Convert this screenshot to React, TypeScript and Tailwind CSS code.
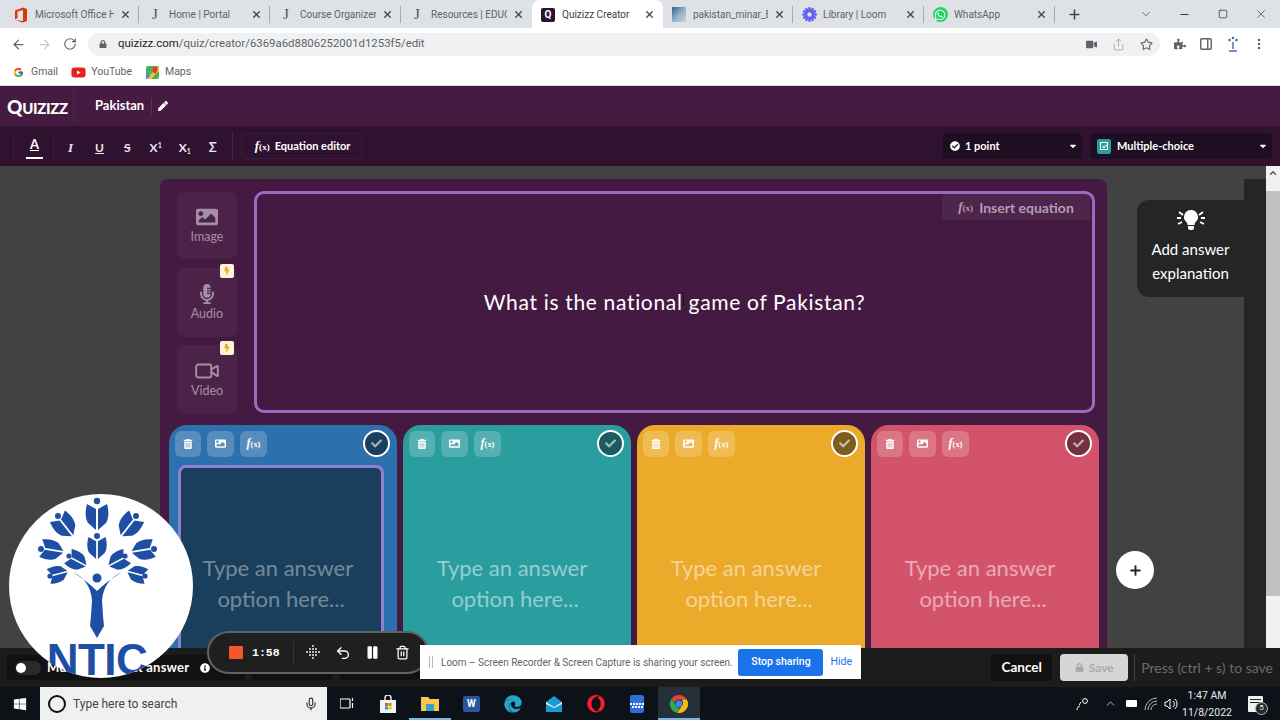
import React from 'react';
import { ArrowLeft, ArrowRight, RotateCw, Plus, X, Minus, Square, ChevronDown, ChevronUp, Video, Star, Share, PanelRight, MoreVertical, Undo2, Pause, Trash2, Mic } from 'lucide-react';
import { FaTrashAlt, FaImage, FaMicrophoneAlt, FaCheck, FaPen, FaCheckCircle, FaBolt, FaLock, FaPuzzlePiece, FaWhatsapp, FaWindows, FaYoutube, FaEdge, FaOpera, FaVideo, FaInfoCircle, FaCaretDown } from 'react-icons/fa';
import { FcGoogle } from 'react-icons/fc';

const quiz = "font-['Lato',sans-serif]";

const OfficeIcon = () => (
  <svg width="14" height="16" viewBox="0 0 14 16">
    <path d="M1 3.5 9 0.5l4 1.5v12l-4 1.5-8-2.5 8 1V3L3.5 4.5V11L1 12.5z" fill="#d83b01" />
  </svg>
);

const JIcon = () => <span className="w-4 text-center text-[15px] leading-none text-[#44546a] font-['Liberation_Serif',serif]">J</span>;

const QuizizzIcon = () => (
  <span className="flex h-[14px] w-[14px] items-center justify-center rounded-[2px] bg-[#2a1330] text-[10px] font-bold leading-none text-white">Q</span>
);

const MinarIcon = () => <span className="h-[15px] w-[14px] rounded-[1px] bg-gradient-to-br from-[#2f5f8f] via-[#8fb2c9] to-[#c8d6dd]" />;

const LoomIcon = () => (
  <svg width="15" height="15" viewBox="0 0 24 24">
    {[0, 30, 60, 90, 120, 150].map((r) => (
      <rect key={r} x="10" y="0" width="4" height="24" rx="2" fill="#625df5" transform={`rotate(${r} 12 12)`} />
    ))}
    <circle cx="12" cy="12" r="3.5" fill="#dee1e6" />
  </svg>
);

const WhatsIcon = () => (
  <span className="flex h-[15px] w-[15px] items-center justify-center rounded-full bg-[#25d366] text-white">
    <FaWhatsapp size={12} />
  </span>
);

const tabs = [
  { title: 'Microsoft Office H', icon: <OfficeIcon />, w: 'w-[134px]', sep: true },
  { title: 'Home | Portal', icon: <JIcon />, w: 'w-[131px]', sep: true },
  { title: 'Course Organizer', icon: <JIcon />, w: 'w-[131px]', sep: true },
  { title: 'Resources | EDUC', icon: <JIcon />, w: 'w-[131px]', sep: false },
  { title: 'Quizizz Creator', icon: <QuizizzIcon />, w: 'w-[131px]', sep: false, active: true },
  { title: 'pakistan_minar_B', icon: <MinarIcon />, w: 'w-[130px]', sep: true },
  { title: 'Library | Loom', icon: <LoomIcon />, w: 'w-[131px]', sep: true },
  { title: 'WhatsApp', icon: <WhatsIcon />, w: 'w-[131px]', sep: true },
];

const ChromeTabs = () => (
  <div className="flex h-[28px] items-end bg-[#dee1e6] pl-[5px] font-['Roboto',sans-serif] text-[10px] text-[#5f6368]">
    {tabs.map((t) => (
      <div
        key={t.title}
        className={`relative flex h-[28px] items-center gap-[6px] pl-2 pr-2 pt-[1px] ${t.w} ${t.active ? 'rounded-t-lg bg-white text-[#3c4043]' : ''}`}
      >
        <span className="flex w-4 shrink-0 justify-center">{t.icon}</span>
        <span className="min-w-0 flex-1 overflow-hidden whitespace-nowrap">{t.title}</span>
        <X size={11} strokeWidth={3} className="shrink-0 text-[#45474a]" />
        {t.sep && <span className="absolute right-0 top-[6px] h-[17px] w-px bg-[#a8abb0]" />}
      </div>
    ))}
    <div className="flex h-[28px] flex-1 items-center pl-[12px] text-[#45474a]">
      <Plus size={15} strokeWidth={2.5} />
      <ChevronDown size={14} strokeWidth={1.2} className="ml-[57px]" />
      <Minus size={13} strokeWidth={1.6} className="ml-[25px] text-[#222]" />
      <Square size={10} strokeWidth={1.6} className="ml-[27px] text-[#222]" />
      <X size={14} strokeWidth={1} className="ml-[26px] text-[#222]" />
    </div>
  </div>
);

const AddressBar = () => (
  <div className="flex h-[31px] items-center bg-white pl-[11px] pt-[1px] text-[#5f6368]">
    <ArrowLeft size={15} strokeWidth={2} />
    <ArrowRight size={15} strokeWidth={2} className="ml-[11px] text-[#c4c7cb]" />
    <RotateCw size={14} strokeWidth={2} className="ml-[11px]" />
    <div className="ml-[11px] flex h-[23px] w-[1072px] items-center rounded-full bg-[#eff1f2] pl-[11px] font-['Roboto',sans-serif] text-[11.4px] text-[#5f6368]">
      <FaLock size={8} />
      <span className="ml-[11px] text-[#202124]">quizizz.com</span>
      <span>/quiz/creator/6369a6d8806252001d1253f5/edit</span>
      <span className="ml-auto flex items-center pr-[7px]">
        <FaVideo size={11} />
        <Share size={13} strokeWidth={1.5} className="ml-[15px] text-[#9a9da1]" />
        <Star size={13} strokeWidth={2} className="ml-[15px]" />
      </span>
    </div>
    <FaPuzzlePiece size={12} className="ml-[14px]" />
    <PanelRight size={14} strokeWidth={2.4} className="ml-[13px]" />
    <svg width="12" height="18" viewBox="0 0 12 18" className="ml-[14px]">
      <circle cx="6" cy="3" r="1.3" fill="#3f6fb0" />
      <circle cx="2.5" cy="5" r="1.3" fill="#3f6fb0" />
      <circle cx="9.5" cy="5" r="1.3" fill="#3f6fb0" />
      <path d="M6 7v7M2 16h8" stroke="#3f6fb0" strokeWidth="1.4" />
    </svg>
    <MoreVertical size={14} strokeWidth={2.4} className="ml-[13px]" />
  </div>
);

const Bookmarks = () => (
  <div className="flex h-[27px] items-center border-b border-[#d8d8d8] bg-white pl-[13px] font-['Roboto',sans-serif] text-[10.5px] text-[#5f6368]">
    <FcGoogle size={11} />
    <span className="ml-[7px]">Gmail</span>
    <FaYoutube size={15} className="ml-[13px] text-[#e62117]" />
    <span className="ml-[5px]">YouTube</span>
    <svg width="13" height="13" viewBox="0 0 13 13" className="ml-[14px]">
      <rect width="13" height="13" rx="2" fill="#4caf50" />
      <path d="M0 13 13 0v5L5 13z" fill="#fbc02d" />
      <path d="M9 1a2.6 2.6 0 0 1 2.6 2.6C11.6 5.5 9 8 9 8S6.4 5.5 6.4 3.6A2.6 2.6 0 0 1 9 1z" fill="#e53935" />
      <path d="M0 6l4 4-3 3H0z" fill="#4285f4" />
    </svg>
    <span className="ml-[6px]">Maps</span>
  </div>
);

const FxMark = ({ className = '' }: { className?: string }) => (
  <span className={`font-['Liberation_Serif',serif] font-bold italic leading-none ${className}`}>
    f<span className="text-[0.7em] not-italic">(x)</span>
  </span>
);

const QuizHeader = () => (
  <div className={`flex h-[40px] items-center bg-[#461b42] pl-[7px] text-white ${quiz}`}>
    <span className="w-[66px] whitespace-nowrap text-[15px] font-black leading-none tracking-[-0.3px]">
      <span className="text-[19px]">Q</span>UIZIZZ
    </span>
    <span className="h-[34px] w-px bg-white/5" />
    <span className="ml-[21px] text-[13px] font-bold">Pakistan</span>
    <span className="ml-[7px] h-[16px] w-px bg-white/10" />
    <FaPen size={10} className="ml-[6px]" />
  </div>
);

const fmtButtons = [
  { label: <em className="font-['Liberation_Serif',serif] text-[13px] font-bold">I</em>, w: 'ml-[14px]' },
  { label: <span className="text-[12px] font-bold underline">U</span>, w: 'ml-[22px]' },
  { label: <span className="text-[12px] font-bold line-through">S</span>, w: 'ml-[20px]' },
  { label: <span className="text-[12px] font-bold">X<span className="relative top-[-4px] text-[7px]">1</span></span>, w: 'ml-[19px]' },
  { label: <span className="text-[12px] font-bold">X<span className="relative top-[2px] text-[7px]">1</span></span>, w: 'ml-[17px]' },
  { label: <span className="text-[13px] font-bold">Σ</span>, w: 'ml-[18px]' },
];

const FormatBar = () => (
  <div className={`flex h-[40px] items-center bg-[#2e1230] text-[#e9e3ea] ${quiz}`}>
    <span className="ml-[13px] h-[26px] w-px bg-white/5" />
    <span className="ml-[12px] flex h-[26px] w-[17px] flex-col items-center justify-center border-b-2 border-white text-[13px] font-bold text-white">
      <span className="underline underline-offset-1">A</span>
    </span>
    <span className="ml-[10px] h-[26px] w-px bg-white/5" />
    {fmtButtons.map((b, i) => (
      <span key={i} className={`leading-none ${b.w}`}>{b.label}</span>
    ))}
    <span className="ml-[15px] h-[26px] w-px bg-white/10" />
    <div className="ml-[8px] flex h-[26px] w-[121px] items-center rounded-[4px] border border-white/5 pl-[13px] text-[11px] font-bold text-white">
      <FxMark className="text-[13px]" />
      <span className="ml-[5px]">Equation editor</span>
    </div>
    <div className="ml-auto flex items-center pr-[8px]">
      <div className="flex h-[26px] w-[139px] items-center rounded-[4px] bg-[#1f0d21] pl-[7px] text-[11px] font-bold text-white">
        <FaCheckCircle size={10} />
        <span className="ml-[5px]">1 point</span>
        <FaCaretDown size={10} className="ml-auto mr-[4px]" />
      </div>
      <div className="ml-[8px] flex h-[26px] w-[182px] items-center rounded-[4px] bg-[#1f0d21] pl-[7px] text-[11px] font-bold text-white">
        <span className="flex h-[15px] w-[14px] items-center justify-center rounded-[2px] bg-[#2a9d9f]">
          <span className="flex h-[8px] w-[8px] items-center justify-center border border-white"><FaCheck size={5} /></span>
        </span>
        <span className="ml-[6px]">Multiple-choice</span>
        <FaCaretDown size={10} className="ml-auto mr-[4px]" />
      </div>
    </div>
  </div>
);

const BoltBadge = () => (
  <span className="absolute right-[3px] top-[-4px] flex h-[14px] w-[14px] items-center justify-center rounded-[2px] bg-[#fff3d6] text-[#eaa92a]">
    <FaBolt size={8} />
  </span>
);

const MediaButton = ({ label, icon, h, badge }: { label: string; icon: React.ReactNode; h: string; badge?: boolean }) => (
  <div className={`relative flex w-[60px] flex-col items-center justify-center rounded-lg bg-white/[0.035] text-[#a48fa5] ${h}`}>
    {badge && <BoltBadge />}
    <span className="flex h-[22px] items-center">{icon}</span>
    <span className="mt-[1px] text-[12.5px] leading-[16px]">{label}</span>
  </div>
);

const answers = [
  { bg: 'bg-[#2d70ae]', chk: 'bg-[#1a3f5c]', inner: 'border-[#8f80cf] bg-[#1a3f5c]', tint: 'text-white/40' },
  { bg: 'bg-[#2a9d9f]', chk: 'bg-[#1b5c63]', inner: 'border-transparent', tint: 'text-white/50' },
  { bg: 'bg-[#ecaa2a]', chk: 'bg-[#7d5c1f]', inner: 'border-transparent', tint: 'text-white/50' },
  { bg: 'bg-[#d3546a]', chk: 'bg-[#74303f]', inner: 'border-transparent', tint: 'text-white/50' },
];

const AnswerCard = ({ a }: { a: (typeof answers)[number] }) => (
  <div className={`flex h-[224px] w-[228px] flex-col overflow-hidden rounded-t-[18px] ${a.bg}`}>
    <div className="flex items-center pl-[6px] pr-[7px] pt-[5px] text-white">
      <span className="flex h-[26px] w-[26px] items-center justify-center rounded-[6px] bg-white/20"><FaTrashAlt size={10} /></span>
      <span className="ml-[6px] flex h-[26px] w-[27px] items-center justify-center rounded-[6px] bg-white/20"><FaImage size={11} /></span>
      <span className="ml-[6px] flex h-[26px] w-[27px] items-center justify-center rounded-[6px] bg-white/20"><FxMark className="text-[12px]" /></span>
      <span className={`ml-auto flex h-[27px] w-[27px] items-center justify-center rounded-full border-2 border-white text-white/60 ${a.chk}`}><FaCheck size={11} /></span>
    </div>
    <div className={`ml-[9px] mr-[13px] mt-[8px] flex-1 rounded-t-[8px] border-[3px] border-b-0 pt-[84px] text-center text-[22px] leading-[31px] ${a.inner} ${a.tint}`}>
      <div className="whitespace-nowrap pr-[6px]">Type an answer</div>
      <div className="whitespace-nowrap">option here...</div>
    </div>
  </div>
);

const Editor = () => (
  <div className={`relative flex h-[482px] overflow-hidden bg-[#424242] ${quiz}`}>
    <div className="ml-[160px] mt-[13px] w-[947px] rounded-t-lg bg-[#451a42]">
      <div className="flex pl-[17px] pt-[12px]">
        <div className="flex w-[60px] flex-col">
          <MediaButton label="Image" h="h-[67px] mt-[1px]" icon={<FaImage size={22} />} />
          <div className="mt-[9px]">
            <MediaButton label="Audio" h="h-[69px]" badge icon={<FaMicrophoneAlt size={20} />} />
          </div>
          <div className="mt-[8px]">
            <MediaButton label="Video" h="h-[69px]" badge icon={<Video size={26} strokeWidth={1.8} />} />
          </div>
        </div>
        <div className="relative ml-[17px] flex h-[222px] w-[841px] items-center justify-center rounded-[10px] border-[3px] border-[#9b6bc0] text-[21px] tracking-[0.67px] text-white">
          <span>What is the national game of Pakistan?</span>
          <span className="absolute right-[2px] top-0 flex h-[26px] w-[148px] items-center justify-center gap-[6px] rounded-[4px] bg-white/5 text-[14px] font-bold tracking-normal text-[#b49cb3]">
            <FxMark className="text-[13px]" />
            Insert equation
          </span>
          <svg width="7" height="14" viewBox="0 0 7 14" fill="none" stroke="#1a1a1a" strokeWidth="1" className="absolute left-[423px] top-[98px]">
            <path d="M1 1h5M3.5 1v12M1 13h5" />
          </svg>
        </div>
      </div>
      <div className="flex gap-[6px] pl-[9px] pt-[11px]">
        {answers.map((a, i) => (
          <AnswerCard key={i} a={a} />
        ))}
      </div>
    </div>
    <div className="ml-[30px] mt-[34px] flex h-[97px] w-[107px] flex-col items-center rounded-l-[12px] bg-[#252525] pt-[8px] text-white">
      <svg width="28" height="24" viewBox="0 0 28 24" fill="white">
        <path d="M14 2a7 7 0 0 0-4.5 12.3c.8.8 1 1.5 1 2.7h7c0-1.2.2-1.9 1-2.7A7 7 0 0 0 14 2zM11 18h6v2a2 2 0 0 1-2 2h-2a2 2 0 0 1-2-2z" />
        <path d="M2 4l4 3M1 16l4-2M26 4l-4 3M27 16l-4-2M0 10h4M24 10h4" stroke="white" strokeWidth="1.8" />
      </svg>
      <span className="mt-[5px] text-[15px] leading-[24px]">Add answer</span>
      <span className="text-[15px] leading-[24px]">explanation</span>
    </div>
    <div className="mt-[13px] w-[22px] bg-[#252525]" />
    <div className="flex w-[14px] flex-col items-center bg-[#f1f1f1]">
      <ChevronUp size={10} strokeWidth={3} className="mt-[2px] text-[#505050]" />
      <div className="mt-[13px] h-[405px] w-full bg-[#c1c1c1]" />
    </div>
    <span className="absolute left-[1116px] top-[385px] flex h-[38px] w-[38px] items-center justify-center rounded-full bg-white text-[#222]">
      <Plus size={15} strokeWidth={3} />
    </span>
  </div>
);

const BottomBar = () => (
  <div className={`flex h-[39px] items-center bg-[#1c1c1c] ${quiz}`}>
    <div className="ml-[7px] flex h-[25px] w-[238px] items-center rounded-[3px] bg-[#111] pl-[8px] text-[13px] font-bold text-white">
      <span className="flex h-[14px] w-[26px] shrink-0 items-center rounded-full bg-[#2a2a2a]">
        <span className="ml-[1px] h-[10px] w-[10px] rounded-full bg-white" />
      </span>
      <span className="ml-[6px] whitespace-nowrap tracking-[0.2px]">Multiple correct answer</span>
      <FaInfoCircle size={10} className="ml-[11px] shrink-0" />
    </div>
    <div className="ml-[7px] h-[25px] w-[80px] rounded-[3px] bg-[#111]" />
    <div className="ml-[8px] h-[25px] w-[80px] rounded-[3px] bg-[#111]" />
    <div className="ml-auto flex items-center pr-[7px]">
      <span className="flex h-[27px] w-[61px] items-center justify-center rounded-[4px] bg-[#111] text-[13.5px] font-bold text-white">Cancel</span>
      <span className="ml-[8px] flex h-[27px] w-[68px] items-center justify-center gap-[5px] rounded-[4px] bg-[#d6d6d6] text-[12px] font-bold text-[#a9a9a9]">
        <FaLock size={9} />
        Save
      </span>
      <span className="ml-[6px] h-[27px] w-px bg-[#444]" />
      <span className="ml-[6px] whitespace-nowrap text-[14px] text-[#6b6b6b]">Press (ctrl + s) to save</span>
    </div>
  </div>
);

const TaskIcon = ({ children, active, underline }: { children: React.ReactNode; active?: boolean; underline?: boolean }) => (
  <div className={`relative flex h-[33px] w-[41.5px] items-center justify-center ${active ? 'bg-[#25303a]' : ''}`}>
    {children}
    {underline && <span className="absolute bottom-0 left-0 h-[2px] w-full bg-[#7fb5dc]" />}
  </div>
);

const Taskbar = () => (
  <div className="flex h-[33px] items-center bg-[#0c1218] font-['Roboto',sans-serif] text-white">
    <span className="flex w-[40px] justify-center"><FaWindows size={14} /></span>
    <div className="flex h-[33px] w-[287px] items-center bg-[#f0f0f0] pl-[8px] text-[12px] text-[#444]">
      <span className="h-[18px] w-[18px] rounded-full border-[2.5px] border-[#111]" />
      <span className="ml-[7px]">Type here to search</span>
      <Mic size={14} className="ml-auto mr-[9px] text-[#333]" />
    </div>
    <div className="ml-[-1px] flex items-center">
      <TaskIcon>
        <svg width="14" height="13" viewBox="0 0 14 13" fill="none" stroke="white" strokeWidth="1.2">
          <path d="M0 2h10M0 11h10M0 2v9M10 2v9M12.5 1v3M12.5 6v5" />
        </svg>
      </TaskIcon>
      <TaskIcon>
        <svg width="18" height="18" viewBox="0 0 18 18">
          <path d="M1 5h16v13H1z" fill="#f2f2f2" />
          <path d="M6 5V3a3 3 0 0 1 6 0v2" stroke="#f2f2f2" fill="none" strokeWidth="1.4" />
          <rect x="6" y="8" width="3" height="3" fill="#f25022" />
          <rect x="9.5" y="8" width="3" height="3" fill="#7fba00" />
          <rect x="6" y="11.5" width="3" height="3" fill="#00a4ef" />
          <rect x="9.5" y="11.5" width="3" height="3" fill="#ffb900" />
        </svg>
      </TaskIcon>
      <TaskIcon underline>
        <svg width="18" height="16" viewBox="0 0 18 16">
          <path d="M0 1h7l2 2h9v12H0z" fill="#f6c94c" />
          <rect x="5" y="8" width="8" height="7" fill="#3aa0c8" />
        </svg>
      </TaskIcon>
      <TaskIcon>
        <span className="flex h-[16px] w-[17px] items-center justify-center rounded-[2px] bg-[#2b579a] text-[10px] font-bold">W</span>
      </TaskIcon>
      <TaskIcon><FaEdge size={18} className="text-[#27a5c9]" /></TaskIcon>
      <TaskIcon>
        <svg width="18" height="18" viewBox="0 0 18 18">
          <path d="M1 7l8-6 8 6v10H1z" fill="#1c9ad6" />
          <path d="M1 7l8 5 8-5v2l-8 4-8-4z" fill="#e8f6fd" />
        </svg>
      </TaskIcon>
      <TaskIcon><FaOpera size={18} className="text-[#ff1b2d]" /></TaskIcon>
      <TaskIcon>
        <span className="flex h-[18px] w-[14px] flex-wrap content-center justify-center gap-[1px] rounded-[2px] bg-[#2f6fd8] pt-[3px]">
          {[0, 1, 2, 3, 4, 5, 6, 7, 8].map((n) => (
            <span key={n} className="h-[2px] w-[2px] bg-white" />
          ))}
        </span>
      </TaskIcon>
      <TaskIcon active underline>
        <svg width="20" height="20" viewBox="0 0 20 20">
          <path d="M10 1a9 9 0 0 1 7.8 4.5H10a4.5 4.5 0 0 0-4.2 3L2.8 4.4A9 9 0 0 1 10 1z" fill="#ea4335" />
          <path d="M2.8 4.4 6.6 11a4.5 4.5 0 0 0 4.6 3.4L8.6 18.9A9 9 0 0 1 2.8 4.4z" fill="#34a853" />
          <path d="M17.8 5.5A9 9 0 0 1 8.6 18.9l3.9-6.6a4.5 4.5 0 0 0 0-6.8z" fill="#fbbc05" />
          <circle cx="10" cy="10" r="3.4" fill="#4285f4" />
        </svg>
      </TaskIcon>
    </div>
    <div className="ml-auto flex items-center text-[#e8e8e8]">
      <svg width="14" height="14" viewBox="0 0 14 14" fill="none" stroke="white" strokeWidth="1">
        <circle cx="9" cy="4" r="2.4" />
        <path d="M1 13c0-3 2-4 3-4M5 5 3 8" />
      </svg>
      <ChevronUp size={13} strokeWidth={1.4} className="ml-[14px]" />
      <span className="ml-[9px] h-[7px] w-[11px] rounded-[1px] bg-white" />
      <svg width="14" height="14" viewBox="0 0 14 14" fill="none" stroke="#b5b5b5" strokeWidth="1" className="ml-[7px]">
        <path d="M1 13A12 12 0 0 1 13 1M4 13a9 9 0 0 1 9-9M7 13a6 6 0 0 1 6-6" />
      </svg>
      <svg width="14" height="14" viewBox="0 0 14 14" fill="none" stroke="white" strokeWidth="1" className="ml-[6px]">
        <path d="M1 5h2l3-3v10L3 9H1zM9 4a4 4 0 0 1 0 6M11 2a7 7 0 0 1 0 10" />
      </svg>
      <div className="ml-[-2px] w-[62px] text-center text-[10.5px] leading-[17px]">
        <div>1:47 AM</div>
        <div>11/8/2022</div>
      </div>
      <div className="relative ml-[10px] mr-[17px] flex h-[16px] w-[15px] flex-col gap-[2px] rounded-[1px] bg-[#f0f0f0] px-[2px] pt-[3px]">
        <span className="h-px bg-[#222]" />
        <span className="h-px bg-[#222]" />
        <span className="absolute bottom-[-3px] right-[-5px] flex h-[13px] w-[13px] items-center justify-center rounded-full border border-[#bbb] bg-[#2a2a2a] text-[8px] leading-none">5</span>
      </div>
    </div>
  </div>
);

const Book = ({ x, y, r, s = 1 }: { x: number; y: number; r: number; s?: number }) => (
  <g transform={`translate(${x} ${y}) rotate(${r}) scale(${s})`} fill="#1f4ea5">
    <path d="M-1 -8-10-13c-2 7-2 14 1 19l8 7z" />
    <path d="M1 -8 10-13c2 7 2 14-1 19l-8 7z" />
  </g>
);

const Logo = () => (
  <div className="absolute left-[9px] top-[494px] flex h-[184px] w-[184px] flex-col items-center overflow-hidden rounded-full bg-white">
    <svg width="184" height="146" viewBox="9 494 184 146" className="shrink-0">
      <Book x={97} y={517} r={0} />
      <circle cx={97} cy={501} r={3.2} fill="#1f4ea5" />
      <Book x={65} y={526} r={-38} s={0.95} />
      <circle cx={58} cy={516} r={3} fill="#1f4ea5" />
      <Book x={129} y={526} r={38} s={0.95} />
      <circle cx={136} cy={516} r={3} fill="#1f4ea5" />
      <Book x={97} y={548} r={0} s={0.85} />
      <circle cx={97} cy={536} r={3} fill="#1f4ea5" />
      <Book x={52} y={550} r={-80} s={0.88} />
      <circle cx={41} cy={549} r={3} fill="#1f4ea5" />
      <Book x={143} y={550} r={80} s={0.88} />
      <circle cx={154} cy={549} r={3} fill="#1f4ea5" />
      <Book x={77} y={561} r={-62} s={0.8} />
      <circle cx={69} cy={556} r={2.6} fill="#1f4ea5" />
      <Book x={118} y={561} r={62} s={0.8} />
      <circle cx={125} cy={556} r={2.6} fill="#1f4ea5" />
      <Book x={58} y={574} r={-105} s={0.75} />
      <circle cx={50} cy={576} r={2.6} fill="#1f4ea5" />
      <Book x={137} y={574} r={105} s={0.75} />
      <circle cx={145} cy={576} r={2.6} fill="#1f4ea5" />
      <circle cx={97} cy={578} r={4.5} fill="#1f4ea5" />
      <path d="M73 572Q90 580 92 600L91 616 90 626 97 638 104 626 103 616 102 600Q104 580 122 572 106 582 97 591 88 582 73 572z" fill="#1f4ea5" />
    </svg>
    <div className="mr-[8px] h-[2px] w-[98px] bg-gradient-to-r from-transparent via-[#1f4ea5] to-transparent" />
    <div className="mr-[8px] mt-[1px] font-['Liberation_Sans',sans-serif] text-[44px] font-bold leading-[38px] tracking-[-0.5px] text-[#1f4ea5]">NTIC</div>
  </div>
);

const RecorderBar = () => (
  <div className="absolute left-[207px] top-[631px] flex h-[43px] w-[222px] items-center rounded-full border-2 border-white/30 bg-[#1f1f1f] pl-[20px] text-white">
    <span className="h-[13px] w-[14px] rounded-[1px] bg-[#f4552e]" />
    <span className="ml-[9px] font-['Liberation_Mono',monospace] text-[11.5px] font-bold">1:58</span>
    <span className="ml-[13px] h-[24px] w-px bg-white/10" />
    <svg width="15" height="15" viewBox="0 0 15 15" fill="white" className="ml-[12px]">
      {[[7, 1], [4, 4], [7, 4], [10, 4], [1, 7], [4, 7], [7, 7], [10, 7], [13, 7], [4, 10], [7, 10], [10, 10], [7, 13]].map(([cx, cy]) => (
        <circle key={`${cx}-${cy}`} cx={cx} cy={cy} r={0.9} />
      ))}
    </svg>
    <Undo2 size={16} strokeWidth={2} className="ml-[14px]" />
    <Pause size={15} fill="white" strokeWidth={2} className="ml-[14px]" />
    <Trash2 size={15} strokeWidth={2} className="ml-[15px]" />
  </div>
);

const LoomBar = () => (
  <div className="absolute left-[420px] top-[645px] flex h-[34px] w-[441px] items-center bg-white pl-[9px] font-['Roboto',sans-serif] text-[10px] text-[#5f6368] shadow">
    <span className="h-[12px] w-[4px] border-x border-[#bbb]" />
    <span className="ml-[8px] whitespace-nowrap">Loom – Screen Recorder &amp; Screen Capture is sharing your screen.</span>
    <span className="ml-auto flex h-[27px] w-[85px] shrink-0 items-center justify-center rounded-[3px] bg-[#1a73e8] text-[10.5px] font-medium text-white">Stop sharing</span>
    <span className="ml-[7px] mr-[9px] text-[10.5px] text-[#1a73e8]">Hide</span>
  </div>
);

export default function App() {
  return (
    <div className="relative flex h-[720px] w-[1280px] flex-col overflow-hidden bg-white">
      <ChromeTabs />
      <AddressBar />
      <Bookmarks />
      <QuizHeader />
      <FormatBar />
      <Editor />
      <BottomBar />
      <Taskbar />
      <Logo />
      <RecorderBar />
      <LoomBar />
    </div>
  );
}
